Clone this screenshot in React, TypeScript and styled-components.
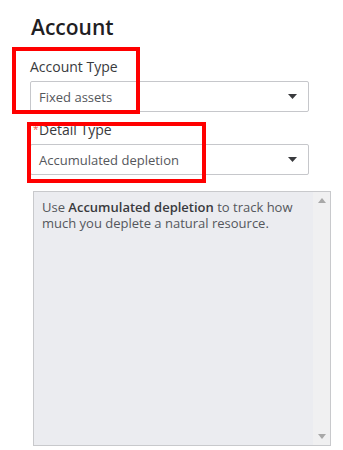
import React from "react";
import styled, { createGlobalStyle } from "styled-components";

const Global = createGlobalStyle`
  html, body { margin: 0; padding: 0; background: #ffffff; }
  body { font-family: "Open Sans", "Noto Sans", Arial, sans-serif; color: #393a3d; }
`;

const Page = styled.div`
  position: relative;
  width: 343px;
  height: 450px;
  overflow: hidden;
  box-sizing: border-box;
  padding: 13px 34px 0 30px;
  display: flex;
  flex-direction: column;
`;

const Title = styled.h1`
  margin: 0 0 0 1px;
  font-size: 21px;
  line-height: 28px;
  font-weight: 600;
  color: #1f2023;
`;

const Field = styled.div<{ $top: number }>`
  display: flex;
  flex-direction: column;
  margin-top: ${(p) => p.$top}px;
`;

const Label = styled.label<{ $indent?: number }>`
  position: relative;
  font-size: 14px;
  line-height: 20px;
  font-weight: 500;
  color: #393a3d;
  margin-bottom: 4px;
  padding-left: ${(p) => p.$indent ?? 0}px;
`;

const Asterisk = styled.span`
  position: absolute;
  left: 3px;
  top: 4px;
  color: #f0553f;
  font-size: 10px;
  line-height: 10px;
`;

const Select = styled.div`
  box-sizing: border-box;
  height: 31px;
  border: 1px solid #c6c7cb;
  border-radius: 2px;
  display: flex;
  align-items: center;
  justify-content: space-between;
  padding: 0 11px 0 8px;
  font-size: 13px;
  color: #55575c;
  background: #fff;
`;

const Caret = styled.svg`
  width: 9px;
  height: 5px;
  flex: none;
`;

const Help = styled.div`
  box-sizing: border-box;
  margin-top: 16px;
  margin-left: 3px;
  width: 298px;
  height: 255px;
  border: 1px solid #c8c9cc;
  background: #ebecf0;
  display: flex;
`;

const HelpText = styled.p`
  flex: 1;
  margin: 0;
  padding: 7px 8px;
  font-size: 13px;
  line-height: 16px;
  color: #55575c;
  b { font-weight: 600; color: #393a3d; }
`;

const Track = styled.div`
  width: 17px;
  flex: none;
  background: #f0f0f1;
  display: flex;
  flex-direction: column;
  justify-content: space-between;
  align-items: center;
  padding: 6px 0;
`;

const Arrow = styled.svg`
  width: 8px;
  height: 5px;
`;

const RedBox = styled.div<{ $l: number; $t: number; $w: number; $h: number }>`
  position: absolute;
  left: ${(p) => p.$l}px;
  top: ${(p) => p.$t}px;
  width: ${(p) => p.$w}px;
  height: ${(p) => p.$h}px;
  box-sizing: border-box;
  border: 4px solid #ff0000;
  pointer-events: none;
`;

const CaretIcon = () => (
  <Caret viewBox="0 0 9 5">
    <path d="M0 0 H9 L4.5 5 Z" fill="#393a3d" />
  </Caret>
);

export default function App() {
  return (
    <>
      <Global />
      <Page>
        <Title>Account</Title>
        <Field $top={16}>
          <Label>Account Type</Label>
          <Select>
            <span>Fixed assets</span>
            <CaretIcon />
          </Select>
        </Field>
        <Field $top={8}>
          <Label $indent={9}>
            <Asterisk>*</Asterisk>Detail Type
          </Label>
          <Select>
            <span>Accumulated depletion</span>
            <CaretIcon />
          </Select>
        </Field>
        <Help>
          <HelpText>
            Use <b>Accumulated depletion</b> to track how much you deplete a natural resource.
          </HelpText>
          <Track>
            <Arrow viewBox="0 0 8 5">
              <path d="M4 0 L8 5 H0 Z" fill="#a8a8a8" />
            </Arrow>
            <Arrow viewBox="0 0 8 5">
              <path d="M0 0 H8 L4 5 Z" fill="#a8a8a8" />
            </Arrow>
          </Track>
        </Help>
        <RedBox $l={12} $t={47} $w={128} $h={67} />
        <RedBox $l={27} $t={122} $w={179} $h={61} />
      </Page>
    </>
  );
}
